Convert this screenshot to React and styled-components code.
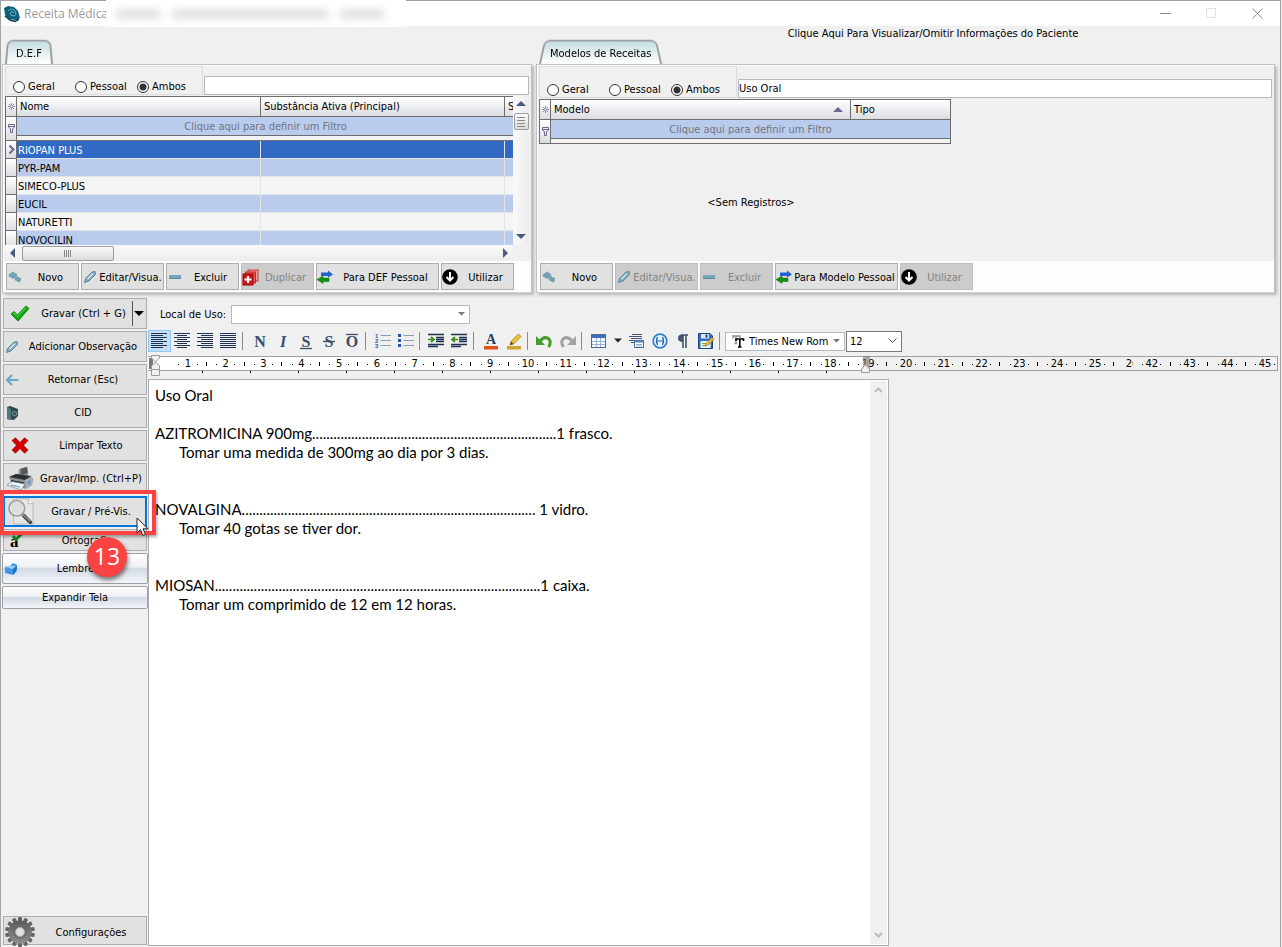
import React from 'react'
import styled, { createGlobalStyle, css } from 'styled-components'

const medicines = ['RIOPAN PLUS', 'PYR-PAM', 'SIMECO-PLUS', 'EUCIL', 'NATURETTI', 'NOVOCILIN']

const prescription = [
  'Uso Oral',
  '',
  'AZITROMICINA 900mg' + '.'.repeat(69) + '1 frasco.',
  '\tTomar uma medida de 300mg ao dia por 3 dias.',
  '',
  '',
  'NOVALGINA' + '.'.repeat(83) + ' 1 vidro.',
  '\tTomar 40 gotas se tiver dor.',
  '',
  '',
  'MIOSAN' + '.'.repeat(92) + '1 caixa.',
  '\tTomar um comprimido de 12 em 12 horas.',
].join('\n')

const rulerLeft = Array.from({ length: 25 }, (_, i) => i + 1)
const rulerRight = [42, 43, 44, 45]

/* ---------- icons ---------- */

const LogoIcon = () => (
  <svg width='16' height='16' viewBox='0 0 16 16'>
    <path d='M0 2 L4 0 L10 1 L14 5 L16 12 L12 14 L5 13 L1 9 Z' fill='#0d5f7c' />
    <path d='M4 5 Q7 1 11 5 Q13 9 10 10 Q6 10 6 7 Q8 4 10 7' fill='none' stroke='#6db6cb' />
    <path d='M1 10 L6 14 L11 15.500 L15 13' fill='none' stroke='#083a4e' strokeWidth='1.500' />
  </svg>
)

const NovoIcon = () => (
  <svg width='14' height='14' viewBox='0 0 14 14'>
    <g fill='#6fa6b5' stroke='#567f8d' strokeWidth='.5'>
      <path d='M3.500 3 L5.500 1.800 L6.500 3.500 L8.500 4 L8.500 6 L7 8 L4 8.200 L3 7 L1.200 6.500 L1.200 4.500 Z' />
      <path d='M8 7.500 L9.500 6.500 L10.500 7.800 L12.500 8.200 L12.500 10.200 L11.500 12 L9.500 11.500 L8.500 10.500 L7 10 Z' />
    </g>
  </svg>
)

const PencilIcon = () => (
  <svg width='14' height='14' viewBox='0 0 14 14'>
    <path d='M1.500 12.500 L2.500 8.500 L9 2 L12 1.500 L12.500 4.500 L6 11 Z' fill='#7fb0bf' stroke='#5f8795' />
    <path d='M4.500 9 L10 3.500' stroke='#d3e6ec' strokeWidth='1.300' />
  </svg>
)

const MinusIcon = () => (
  <svg width='14' height='14' viewBox='0 0 14 14'>
    <rect x='1' y='5' width='12' height='4' fill='#6fa9bb' />
    <path d='M1 8.500 H13' stroke='#5b8b9c' />
  </svg>
)

const DuplicateIcon = () => (
  <svg width='17' height='17' viewBox='0 0 17 17'>
    <rect x='6' y='1' width='10' height='11' fill='#e8a0a0' stroke='#c33' />
    <rect x='3.500' y='3' width='10' height='11' fill='#e06060' stroke='#c22' />
    <rect x='1' y='5' width='10' height='11' fill='#c91818' stroke='#a80000' />
    <path d='M6 7 V14 M2.500 10.500 H9.500' stroke='#fff' strokeWidth='2.200' />
  </svg>
)

const SwapIcon = () => (
  <svg width='16' height='14' viewBox='0 0 16 14'>
    <path d='M4 2.500 H11 V.5 L16 4.500 L11 7.500 V6 H4 Z' fill='#1f62d0' />
    <path d='M12 8 H6 V6 L0 9.500 L6 13.500 V11.500 H12 Z' fill='#12920f' stroke='#0b6b0a' strokeWidth='.5' />
  </svg>
)

const DownCircleIcon = () => (
  <svg width='16' height='16' viewBox='0 0 16 16'>
    <circle cx='8' cy='8' r='7.800' fill='#000' />
    <path d='M8 3 V11 M4.500 8 L8 11.500 L11.500 8' fill='none' stroke='#fff' strokeWidth='2' />
  </svg>
)

const CheckIcon = () => (
  <svg width='20' height='17' viewBox='0 0 20 17'>
    <path d='M1 9 L4 6.500 L7.500 10 L16 1 L19 3.500 L8 16 Z' fill='#12a812' stroke='#0a8a0a' />
    <path d='M3 9 L4 8 L7.500 11.500 L16 2.500' fill='none' stroke='#5fd85f' />
  </svg>
)

const BackIcon = () => (
  <svg width='13' height='12' viewBox='0 0 13 12'>
    <path d='M6 1 L1 6 L6 11 M1.500 6 H12.500' fill='none' stroke='#6aabc0' strokeWidth='2.200' />
  </svg>
)

const BookIcon = () => (
  <svg width='13' height='16' viewBox='0 0 13 16'>
    <path d='M1 2 L4 1 L12 4 V11 L8 15 L1 14 Z' fill='#2d4a4c' />
    <path d='M1 2 L5 4 V15 L1 14 Z' fill='#4f7779' />
    <circle cx='8.500' cy='8.500' r='2.800' fill='#5d8486' />
    <circle cx='8.500' cy='8.500' r='1.200' fill='#253c3e' />
  </svg>
)

const CrossIcon = () => (
  <svg width='18' height='17' viewBox='0 0 18 17'>
    <path
      d='M1 3.500 L4.500 .8 L9 5.500 L13.500 .8 L17 3.500 L12.500 8.300 L17 13 L13.500 16.200 L9 11.500 L4.500 16.200 L1 13 L5.500 8.300 Z'
      fill='#d40000'
      stroke='#a80000'
      strokeWidth='.7'
    />
  </svg>
)

const PrinterIcon = () => (
  <svg width='28' height='24' viewBox='0 0 28 24'>
    <path d='M13 2 L21 0 L22 9 L12 9 Z' fill='#8a8f94' />
    <path d='M15 1.500 L21 0 L22 6 L15 8 Z' fill='#54595e' />
    <path d='M3 10 L10 7 L25 9 L27 12 L26 18 L20 22 L6 17 Z' fill='#8b9095' />
    <path d='M3 10 L10 7 L25 9 L19 13 Z' fill='#2d3033' />
    <path d='M19 13 L26 10 L26 17 L20 22 Z' fill='#a9b2bb' />
    <path d='M22 14 L24.500 13 V16 L22 18 Z' fill='#5f93bd' />
    <path d='M5 13 L18 15.500 V18 L5 15 Z' fill='#1d1f21' />
    <path d='M1 18 L6 14.500 L19 17 L15 23 Z' fill='#f4f7fa' stroke='#7b8085' strokeWidth='.7' />
    <path d='M5 18 L14 20' stroke='#7fb1d6' strokeWidth='1.500' />
  </svg>
)

const MagnifierIcon = () => (
  <svg width='28' height='27' viewBox='0 0 28 29'>
    <path d='M6 1 H22 L27 6 V28 H6 Z' fill='#e6e6e6' stroke='#b5b5b5' />
    <path d='M22 1 V6 H27' fill='#fafafa' stroke='#b5b5b5' />
    <circle cx='9.500' cy='11' r='8' fill='#dcdfe2' stroke='#9a9a9a' strokeWidth='2.400' />
    <circle cx='9.500' cy='11' r='7' fill='none' stroke='#f5f5f5' />
    <path d='M17 19 L24 26' stroke='#444' strokeWidth='4' strokeLinecap='round' />
    <path d='M15.500 17.500 L24 25' stroke='#999' strokeWidth='1.500' />
  </svg>
)

const SpellIcon = () => (
  <svg width='14' height='17' viewBox='0 0 14 17'>
    <text x='1' y='15' fontFamily='Liberation Serif, serif' fontWeight='700' fontSize='17'>a</text>
    <path d='M4 4 L7 7.500 L13 1.500' fill='none' stroke='#168a20' strokeWidth='2.800' />
  </svg>
)

const BoxIcon = () => (
  <svg width='14' height='14' viewBox='0 0 14 14'>
    <path d='M1 5 L6 4 L9 1 L13 3 L12.500 9 L9 13 L1 11 Z' fill='#3f95e8' />
    <path d='M1 5 L6 4 L12 4 L9 7 Z' fill='#9dcff8' />
    <path d='M9 7 L13 3.500 L12.500 9 L9 13 Z' fill='#1c6fc4' />
  </svg>
)

const GearIcon = () => (
  <svg width='30' height='30' viewBox='-15 -15 30 30'>
    <defs>
      <linearGradient id='gear' x1='0' y1='0' x2='0' y2='1'>
        <stop offset='0' stopColor='#5b5b5b' />
        <stop offset='1' stopColor='#8e8e8e' />
      </linearGradient>
    </defs>
    {Array.from({ length: 14 }, (_, i) => (
      <rect key={i} x='-2' y='-15' width='4' height='6' rx='1' fill='#666' transform={`rotate(${(i * 360) / 14})`} />
    ))}
    <circle r='11.500' fill='url(#gear)' />
    <circle r='6' fill='none' stroke='#6a6a6a' strokeWidth='1.500' />
    <circle r='4.500' fill='#e1e1e1' stroke='#aaa' />
  </svg>
)

const AlignIcon = ({ rows }) => (
  <svg width='17' height='16' viewBox='0 0 17 16'>
    {rows.map(([x, w], i) => (
      <rect key={i} x={x} y={i * 2} width={w} height='1' fill='#1f3350' />
    ))}
  </svg>
)

const full = [0, 16]
const alignments = {
  left: [full, [0, 12], full, [0, 12], full, [0, 12], full, [0, 12]],
  center: [full, [3, 10], full, [3, 10], full, [3, 10], full, [3, 10]],
  right: [full, [4, 12], full, [4, 12], full, [4, 12], full, [4, 12]],
  justify: [full, full, full, full, full, full, full, full],
}

const LetterIcon = ({ letter, italic, line }) => (
  <svg width='16' height='17' viewBox='0 0 16 17'>
    <text
      x='8'
      y='14'
      textAnchor='middle'
      fontFamily='Liberation Serif, serif'
      fontWeight='700'
      fontStyle={italic ? 'italic' : 'normal'}
      fontSize='16'
      fill='#3a4d69'
    >
      {letter}
    </text>
    {line && <path d={`M2 ${line} H14`} stroke='#3a4d69' strokeWidth='1.300' />}
  </svg>
)

const ListIcon = ({ numbered }) => (
  <svg width='16' height='16' viewBox='0 0 16 16'>
    {[3, 8, 13].map((y, i) => (
      <g key={y}>
        <path d={`M5.500 ${y - 0.5} H16`} stroke='#8a9bb0' />
        {numbered ? (
          <text x='0' y={y + 2} fontSize='6' fontWeight='700' fontFamily='Liberation Sans, sans-serif' fill='#2456b8'>
            {i + 1}
          </text>
        ) : (
          <rect x='0' y={y - 2} width='3' height='3' fill='#2456b8' />
        )}
      </g>
    ))}
  </svg>
)

const IndentIcon = ({ back }) => (
  <svg width='17' height='16' viewBox='0 0 17 16'>
    <path d='M0 1.500 H16 M8 4.500 H16 M8 6.500 H16 M8 8.500 H16 M0 11.500 H16 M0 13.500 H10' stroke='#1f3350' strokeWidth='1.300' />
    <path d={back ? 'M7 6.500 H1.500 M4 4 L1 6.500 L4 9' : 'M0 6.500 H5.500 M3 4 L6 6.500 L3 9'} fill='none' stroke='#3b8a1e' strokeWidth='1.700' />
  </svg>
)

const FontColorIcon = () => (
  <svg width='16' height='17' viewBox='0 0 16 17'>
    <text x='8' y='11' textAnchor='middle' fontFamily='Liberation Serif, serif' fontWeight='700' fontSize='14' fill='#2b3f5c'>A</text>
    <rect x='1' y='13' width='14' height='3.500' fill='#e2501c' />
  </svg>
)

const MarkerIcon = () => (
  <svg width='16' height='17' viewBox='0 0 16 17'>
    <rect x='1' y='13' width='14' height='3.500' fill='#d1a43a' />
    <path d='M4 12 L5 8.500 L12.500 1 L15 3.500 L7.500 11 Z' fill='#f2c531' stroke='#9a7416' strokeWidth='.8' />
    <path d='M4 12 L5 8.500 L7.500 11 Z' fill='#5b4a2a' />
  </svg>
)

const UndoIcon = ({ flip }) => (
  <svg width='17' height='13' viewBox='0 0 17 13'>
    <g transform={flip ? 'translate(17 0) scale(-1 1)' : undefined}>
      <path d='M4 6 Q8 1 12.500 3.500 Q16 7 12.500 12' fill='none' stroke={flip ? '#a2a2a2' : '#459c2a'} strokeWidth='3' />
      <path d='M0 1 V10 H9 Z' fill={flip ? '#a2a2a2' : '#459c2a'} />
    </g>
  </svg>
)

const TableIcon = () => (
  <svg width='15' height='14' viewBox='0 0 15 14'>
    <rect x='.5' y='.5' width='14' height='13' fill='#f4f8fd' stroke='#4a6a98' />
    <rect x='1' y='1' width='13' height='3' fill='#3d6cc0' />
    <path d='M1 7.500 H14 M1 10.500 H14 M5.500 4 V13 M9.500 4 V13' stroke='#9db4d2' />
  </svg>
)

const FieldIcon = () => (
  <svg width='16' height='16' viewBox='0 0 16 16'>
    <path d='M3 1.500 H13 M0 3.500 H13 M2 5.500 H13 M0 7.500 H6 M2 9.500 H6' stroke='#42566f' />
    <rect x='5.500' y='7.500' width='9' height='7' fill='#fff' stroke='#4a6a98' />
    <rect x='5.500' y='7.500' width='9' height='2' fill='#4f86c8' />
    <path d='M7 11.500 H13 M7 13 H13' stroke='#7f97b5' strokeWidth='.8' />
  </svg>
)

const ThetaIcon = () => (
  <svg width='16' height='16' viewBox='0 0 16 16'>
    <circle cx='8' cy='8' r='6.800' fill='#eaf4fd' stroke='#2f7fd0' strokeWidth='1.700' />
    <path d='M5.500 4 Q3.500 8 5.500 12 M10.500 4 Q12.500 8 10.500 12 M4.500 8 H11.500' fill='none' stroke='#1f5fae' strokeWidth='1.200' />
  </svg>
)

const PilcrowIcon = () => (
  <svg width='12' height='15' viewBox='0 0 12 15'>
    <path d='M5 1 H11 M6 1 V14 M9 1 V14' stroke='#41546e' strokeWidth='1.600' />
    <path d='M6 .3 Q1 .3 1 4.200 Q1 8 6 8 Z' fill='#41546e' />
  </svg>
)

const SaveIcon = () => (
  <svg width='16' height='16' viewBox='0 0 16 16'>
    <path d='M.5 .5 H12 L14.500 3 V15.500 H.5 Z' fill='#2f6cc4' stroke='#1d447f' />
    <rect x='3' y='1' width='8' height='4.500' fill='#dfe9f5' />
    <rect x='7.500' y='1.500' width='2' height='3' fill='#1d447f' />
    <rect x='2.500' y='8' width='10' height='7' fill='#eef5e4' />
    <path d='M4 10.500 H10 M4 12.500 H8' stroke='#6fae4f' />
    <path d='M7 13 L8 10.500 L14 4.500 L16 6.500 L9.500 12.500 Z' fill='#f0b93a' stroke='#96701a' strokeWidth='.7' />
  </svg>
)

const TrueTypeIcon = () => (
  <svg width='12' height='13' viewBox='0 0 12 13'>
    <path d='M1 3.500 V1 H8 V3 M4 1 V8 M2.500 8.500 H5' fill='none' stroke='#888' strokeWidth='1.300' />
    <path d='M4 6 V4 H11.500 V6 M7.800 4 V12 M6 12 H9.500' fill='none' stroke='#000' strokeWidth='1.600' />
  </svg>
)

const CursorIcon = () => (
  <svg width='13' height='20' viewBox='0 0 13 20'>
    <path d='M1 1 V16 L4.500 12.700 L7 18.500 L9.500 17.400 L7 11.800 H12 Z' fill='#fff' stroke='#222' />
  </svg>
)

const StarMark = () => (
  <svg width='7' height='7' viewBox='0 0 7 7'>
    <path d='M3.500 0 V7 M0 3.500 H7 M1 1 L6 6 M6 1 L1 6' stroke='#77739a' strokeWidth='.8' />
    <circle cx='3.500' cy='3.500' r='1' fill='#f0f0f0' />
  </svg>
)

const FunnelMark = () => (
  <svg width='7' height='9' viewBox='0 0 7 9'>
    <path d='M.5 .5 H6.500 V3 L4.500 5 V8.500 H2.500 V5 L.5 3 Z M.5 2.500 H6.500' fill='none' stroke='#6a6690' />
  </svg>
)

const RowMark = () => (
  <svg width='7' height='9' viewBox='0 0 7 9'>
    <path d='M1.500 .5 L5.500 4.500 L1.500 8.500' fill='none' stroke='#6a6690' strokeWidth='2' />
  </svg>
)

const Triangle = ({ dir = 'down', size = 10, color = '#4b5a82' }) => {
  const shapes = { down: 'M0 2 H10 L5 7 Z', up: 'M0 7 H10 L5 2 Z', left: 'M7 0 V10 L2 5 Z', right: 'M3 0 V10 L8 5 Z' }
  return (
    <svg width={size} height={size} viewBox='0 0 10 10'>
      <path d={shapes[dir]} fill={color} />
    </svg>
  )
}

/* ---------- small parts ---------- */

const FilterBar = ({ name, value, tall }) => (
  <FilterRow $tall={tall}>
    <RadioGroup>
      {['Geral', 'Pessoal', 'Ambos'].map((label) => (
        <RadioLabel key={label}>
          <Radio type='radio' name={name} defaultChecked={label === 'Ambos'} />
          {label}
        </RadioLabel>
      ))}
    </RadioGroup>
    <SearchInput type='text' aria-label='Pesquisar' defaultValue={value} />
  </FilterRow>
)

const Action = ({ icon, wide, disabled, children }) => (
  <ActionButton type='button' $wide={wide} disabled={disabled}>
    {icon}
    <span>{children}</span>
  </ActionButton>
)

const App = () => {
  return (
    <>
      <GlobalStyle />
      <Window>
        <TitleBar>
          <LogoIcon />
          <h1>Receita Médica</h1>
          <Blurred>
            <i />
            <i />
            <i />
          </Blurred>
          <WindowButton type='button' aria-label='Minimizar'>
            <svg width='11' height='11'><path d='M0 5.500 H11' stroke='#8a8a8a' /></svg>
          </WindowButton>
          <WindowButton type='button' aria-label='Maximizar'>
            <svg width='11' height='11'><rect x='.5' y='.5' width='9' height='9' fill='none' stroke='#e2e2e2' /></svg>
          </WindowButton>
          <WindowButton type='button' aria-label='Fechar'>
            <svg width='11' height='11'><path d='M.5 .5 L10.500 10.500 M10.500 .5 L.5 10.500' stroke='#8a8a8a' /></svg>
          </WindowButton>
        </TitleBar>

        <PatientBar>
          <button type='button'>Clique Aqui Para Visualizar/Omitir Informações do Paciente</button>
        </PatientBar>

        <Panels>
          <section>
            <Tab type='button'>D.E.F</Tab>
            <Panel>
              <FilterBar name='def' />
              <GridArea>
                <GridClip>
                  <DataTable>
                    <colgroup>
                      <Col $w={12} />
                      <Col $w={244} />
                      <Col $w={244} />
                      <Col $w={9} />
                    </colgroup>
                    <thead>
                      <tr>
                        <Mark><StarMark /></Mark>
                        <HeadCell>Nome</HeadCell>
                        <HeadCell>Substância Ativa (Principal)</HeadCell>
                        <HeadCell>S</HeadCell>
                      </tr>
                    </thead>
                    <tbody>
                      <tr>
                        <Mark rowSpan='2'><FunnelMark /></Mark>
                        <FilterCell colSpan='3'>Clique aqui para definir um Filtro</FilterCell>
                      </tr>
                      <tr><SplitCell colSpan='3' /></tr>
                      {medicines.map((name, i) => (
                        <DataRow key={name} $selected={i === 0}>
                          <Mark>{i === 0 && <RowMark />}</Mark>
                          <td>{name}</td>
                          <td />
                          <td />
                        </DataRow>
                      ))}
                    </tbody>
                  </DataTable>
                </GridClip>
                <VScroll>
                  <Triangle dir='up' />
                  <VThumb>
                    <svg width='8' height='10'><path d='M0 .5 H8 M0 3.500 H8 M0 6.500 H8 M0 9.500 H8' stroke='#888' /></svg>
                  </VThumb>
                  <Triangle dir='down' />
                </VScroll>
                <HScroll>
                  <Triangle dir='left' />
                  <HThumb>
                    <svg width='8' height='7'><path d='M.5 0 V7 M2.500 0 V7 M4.500 0 V7 M6.500 0 V7' stroke='#888' /></svg>
                  </HThumb>
                  <Triangle dir='right' />
                </HScroll>
              </GridArea>
              <Actions>
                <Action icon={<NovoIcon />}>Novo</Action>
                <Action icon={<PencilIcon />} wide={83}>Editar/Visua.</Action>
                <Action icon={<MinusIcon />}>Excluir</Action>
                <Action icon={<DuplicateIcon />} disabled>Duplicar</Action>
                <Action icon={<SwapIcon />} wide={123}>Para DEF Pessoal</Action>
                <Action icon={<DownCircleIcon />}>Utilizar</Action>
              </Actions>
            </Panel>
          </section>

          <section>
            <Tab type='button'>Modelos de Receitas</Tab>
            <Panel>
              <FilterBar name='modelos' value='Uso Oral' tall />
              <ModelGrid>
                <DataTable>
                  <colgroup>
                    <Col $w={12} />
                    <Col $w={300} />
                    <Col $w={100} />
                  </colgroup>
                  <thead>
                    <tr>
                      <Mark><StarMark /></Mark>
                      <HeadCell>
                        <Sorted>Modelo<Triangle dir='up' color='#6a6690' /></Sorted>
                      </HeadCell>
                      <HeadCell>Tipo</HeadCell>
                    </tr>
                  </thead>
                  <tbody>
                    <tr>
                      <Mark rowSpan='2'><FunnelMark /></Mark>
                      <FilterCell colSpan='2' $closed>Clique aqui para definir um Filtro</FilterCell>
                    </tr>
                    <tr><SplitCell colSpan='2' $closed /></tr>
                  </tbody>
                </DataTable>
                <Empty>&lt;Sem Registros&gt;</Empty>
              </ModelGrid>
              <Actions>
                <Action icon={<NovoIcon />}>Novo</Action>
                <Action icon={<PencilIcon />} wide={83} disabled>Editar/Visua.</Action>
                <Action icon={<MinusIcon />} disabled>Excluir</Action>
                <Action icon={<SwapIcon />} wide={123}>Para Modelo Pessoal</Action>
                <Action icon={<DownCircleIcon />} disabled>Utilizar</Action>
              </Actions>
            </Panel>
          </section>
        </Panels>

        <Main>
          <Sidebar>
            <SplitButton>
              <SideButton type='button' $icon={32}><CheckIcon /><span>Gravar (Ctrl + G)</span></SideButton>
              <DropButton type='button' aria-label='Mais opções'><Triangle color='#000' size={10} /></DropButton>
            </SplitButton>
            <SideButton type='button' $icon={16}><PencilIcon /><span>Adicionar Observação</span></SideButton>
            <SideButton type='button' $icon={16}><BackIcon /><span>Retornar (Esc)</span></SideButton>
            <SideButton type='button' $icon={16}><BookIcon /><span>CID</span></SideButton>
            <SideButton type='button' $icon={32}><CrossIcon /><span>Limpar Texto</span></SideButton>
            <SideButton type='button' $icon={32}><PrinterIcon /><span>Gravar/Imp. (Ctrl+P)</span></SideButton>
            <Highlighted>
              <SideButton type='button' $icon={32} $focused><MagnifierIcon /><span>Gravar / Pré-Vis.</span></SideButton>
              <RedFrame />
              <Pointer><CursorIcon /></Pointer>
              <StepBadge>13</StepBadge>
            </Highlighted>
            <SideButton type='button' $icon={24} $h={22}><SpellIcon /><span>Ortografia</span></SideButton>
            <GlossButton type='button' $icon={16}><BoxIcon /><span>Lembretes</span></GlossButton>
            <GlossButton type='button' $icon={0} $h={23}><span>Expandir Tela</span></GlossButton>
            <BottomButton type='button' $icon={32} $h={29}><GearIcon /><span>Configurações</span></BottomButton>
          </Sidebar>

          <Editor>
            <UseRow>
              <label htmlFor='local'>Local de Uso:</label>
              <SelectBox $w={239} $h={19}>
                <select id='local' />
                <Triangle color='#777' size={7} />
              </SelectBox>
            </UseRow>

            <Toolbar>
              <Tool type='button' aria-label='Esquerda' $active><AlignIcon rows={alignments.left} /></Tool>
              <Tool type='button' aria-label='Centro'><AlignIcon rows={alignments.center} /></Tool>
              <Tool type='button' aria-label='Direita'><AlignIcon rows={alignments.right} /></Tool>
              <Tool type='button' aria-label='Justificar'><AlignIcon rows={alignments.justify} /></Tool>
              <Divider />
              <Tool type='button' aria-label='Negrito'><LetterIcon letter='N' /></Tool>
              <Tool type='button' aria-label='Itálico'><LetterIcon letter='I' italic /></Tool>
              <Tool type='button' aria-label='Sublinhado'><LetterIcon letter='S' line={15.5} /></Tool>
              <Tool type='button' aria-label='Tachado'><LetterIcon letter='S' line={8.5} /></Tool>
              <Tool type='button' aria-label='Sobrelinha'><LetterIcon letter='O' line={1.5} /></Tool>
              <Divider />
              <Tool type='button' aria-label='Numeração'><ListIcon numbered /></Tool>
              <Tool type='button' aria-label='Marcadores'><ListIcon /></Tool>
              <Divider />
              <Tool type='button' aria-label='Aumentar recuo'><IndentIcon /></Tool>
              <Tool type='button' aria-label='Diminuir recuo'><IndentIcon back /></Tool>
              <Divider />
              <Tool type='button' aria-label='Cor da fonte'><FontColorIcon /></Tool>
              <Tool type='button' aria-label='Realce'><MarkerIcon /></Tool>
              <Divider />
              <Tool type='button' aria-label='Desfazer'><UndoIcon /></Tool>
              <Tool type='button' aria-label='Refazer'><UndoIcon flip /></Tool>
              <Divider />
              <Tool type='button' aria-label='Tabela'><TableIcon /></Tool>
              <Tool type='button' aria-label='Opções da tabela' $narrow><Triangle color='#222' size={8} /></Tool>
              <Tool type='button' aria-label='Campo'><FieldIcon /></Tool>
              <Tool type='button' aria-label='Símbolo'><ThetaIcon /></Tool>
              <Tool type='button' aria-label='Parágrafo'><PilcrowIcon /></Tool>
              <Tool type='button' aria-label='Salvar'><SaveIcon /></Tool>
              <Divider />
              <SelectBox $w={120} $h={19} $pad={23}>
                <FontMark><TrueTypeIcon /></FontMark>
                <select aria-label='Fonte'><option>Times New Roman</option></select>
                <Triangle color='#777' size={7} />
              </SelectBox>
              <SelectBox $w={56} $h={21} $dark>
                <select aria-label='Tamanho'><option>12</option></select>
                <svg width='9' height='6'><path d='M.5 .5 L4.500 4.500 L8.500 .5' fill='none' stroke='#555' /></svg>
              </SelectBox>
            </Toolbar>

            <Ruler>
              <Track>
                <Scale $count={25}>
                  {rulerLeft.map((n) => <span key={n}>{n}</span>)}
                </Scale>
                <Cut>26</Cut>
                <Scale $count={4}>
                  {rulerRight.map((n) => <span key={n}>{n}</span>)}
                </Scale>
              </Track>
              <LeftHandle>
                <svg width='16' height='22' viewBox='0 0 16 22'>
                  <rect x='1' y='4' width='4' height='11' fill='#777' />
                  <path d='M3.500 1.500 H11.500 V4 L7.500 8 L11.500 12 V21.500 H3.500 V12 L7.500 8 L3.500 4 Z M3.500 15.500 H11.500' fill='#f0f0f0' stroke='#999' />
                </svg>
              </LeftHandle>
              <RightHandle>
                <svg width='11' height='18' viewBox='0 0 11 18'>
                  <rect x='2' y='0' width='7' height='13' fill='#777' opacity='.6' />
                  <path d='M.5 16.500 V13 L4.500 8.500 L8.500 13 V16.500 Z' fill='#f0f0f0' stroke='#999' />
                </svg>
              </RightHandle>
            </Ruler>
            <TabStops />

            <Page>
              <textarea aria-label='Receita' wrap='off' defaultValue={prescription} spellCheck='false' />
              <PageScroll>
                <svg width='9' height='6'><path d='M1 5 L4.500 1.500 L8 5' fill='none' stroke='#bbb' strokeWidth='2' /></svg>
                <svg width='9' height='6'><path d='M1 1 L4.500 4.500 L8 1' fill='none' stroke='#bbb' strokeWidth='2' /></svg>
              </PageScroll>
            </Page>
          </Editor>
        </Main>
      </Window>
    </>
  )
}

const GlobalStyle = createGlobalStyle`
  * {
    box-sizing: border-box;
  }
  body {
    margin: 0;
    background: #f0f0f0;
    color: #000;
    font: 11px/15px 'DejaVu Sans Condensed', 'Noto Sans', sans-serif;
  }
  button, input, select {
    font: inherit;
    color: inherit;
    margin: 0;
    padding: 0;
  }
  svg {
    display: block;
    flex-shrink: 0;
    overflow: visible;
  }
`

const Window = styled.main`
  min-height: 100vh;
  margin-right: 1px;
  border: 1px solid #a5a5a5;
  border-bottom: 0;
  display: flex;
  flex-direction: column;
`

const TitleBar = styled.header`
  height: 25px;
  background: #fff;
  display: flex;
  align-items: center;
  padding-left: 3px;
  h1 {
    width: 82px;
    margin: 0 0 0 4px;
    font: 12px/16px 'Open Sans', sans-serif;
    color: #999;
    white-space: nowrap;
  }
`

const Blurred = styled.div`
  display: flex;
  align-items: center;
  gap: 12px;
  width: 300px;
  height: 27px;
  margin-right: auto;
  padding: 0 10px;
  background: #fff;
  i {
    height: 8px;
    background: #dadada;
    filter: blur(4px);
  }
  i:nth-child(1) { width: 44px; }
  i:nth-child(2) { width: 156px; }
  i:nth-child(3) { width: 44px; }
`

const WindowButton = styled.button`
  width: 46px;
  height: 25px;
  display: grid;
  place-items: center;
  border: 0;
  background: none;
`

const PatientBar = styled.div`
  height: 15px;
  padding-left: 585px;
  text-align: center;
  button {
    border: 0;
    background: none;
    display: inline-block;
  }
`

const Panels = styled.div`
  display: grid;
  grid-template-columns: 530px 1fr;
  gap: 4px;
  padding: 0 5px 5px 1px;
`

const Tab = styled.button`
  position: relative;
  z-index: 0;
  display: block;
  height: 23px;
  margin-left: 4px;
  padding: 1px 10px 0;
  border: 0;
  background: none;
  &::before {
    content: '';
    position: absolute;
    z-index: -1;
    inset: -4px -1px 0;
    border: 1px solid #9a9fa3;
    border-width: 2px 2px 0;
    border-radius: 7px 7px 0 0;
    background: linear-gradient(#c5dde2, #fff);
    transform: perspective(60px) rotateX(12deg);
    transform-origin: bottom;
  }
`

const Panel = styled.div`
  height: 229px;
  display: flex;
  flex-direction: column;
  border: 1px solid #bfc0c2;
  border-bottom-color: #d0d0d0;
  padding: 1px 2px 0;
  box-shadow: 2px 2px 3px #b5b5b5, inset 1px 1px 0 #fff;
  background: #f0f0f0;
`

const FilterRow = styled.div`
  display: flex;
  align-items: flex-end;
  gap: 1px;
  height: ${(p) => (p.$tall ? 33 : 30)}px;
  padding-bottom: 1px;
`

const RadioGroup = styled.div`
  width: 198px;
  height: 100%;
  display: grid;
  grid-template-columns: 62px 62px 1fr;
  align-items: end;
  padding: 0 0 0 7px;
  border: 1px solid #dcdcdc;
`

const RadioLabel = styled.label`
  display: flex;
  align-items: center;
  gap: 3px;
`

const Radio = styled.input`
  appearance: none;
  width: 12px;
  height: 12px;
  border: 1px solid #333;
  border-radius: 50%;
  background: #fff;
  &:checked {
    background: radial-gradient(circle, #333 3px, #fff 4px);
  }
`

const SearchInput = styled.input`
  flex: 1;
  min-width: 0;
  height: 19px;
  border: 1px solid #b4bac4;
  background: #fff;
`

const GridArea = styled.div`
  display: grid;
  grid-template-columns: 1fr 16px;
  grid-template-rows: 149px 16px;
`

const GridClip = styled.div`
  overflow: hidden;
`

const DataTable = styled.table`
  table-layout: fixed;
  border-collapse: separate;
  border-spacing: 0;
  width: 1px;
  td, th {
    padding: 0;
    font-weight: 400;
    white-space: nowrap;
    overflow: hidden;
  }
`

const Col = styled.col`
  width: ${(p) => p.$w}px;
`

const headGradient = css`
  background: linear-gradient(#fff, #dcdde2);
`

const Mark = styled.td`
  ${headGradient}
  border: 1px solid #6e6e6e;
  border-top: 0;
  svg {
    margin: 0 auto;
  }
  thead & {
    border-top: 1px solid #6e6e6e;
  }
`

const HeadCell = styled.th`
  ${headGradient}
  height: 21px;
  text-align: left;
  border: 1px solid #6e6e6e;
  border-left: 0;
  && {
    padding-left: 3px;
  }
  &:nth-child(4) {
    border-right: 0;
  }
`

const Sorted = styled.div`
  display: flex;
  align-items: center;
  justify-content: space-between;
  padding-right: 7px;
`

const FilterCell = styled.td`
  height: 19px;
  background: #bacced;
  border-bottom: 1px solid #6e6e6e;
  border-right: ${(p) => (p.$closed ? '1px solid #6e6e6e' : 0)};
  text-align: center;
  color: #71757f;
`

const SplitCell = styled.td`
  height: 5px;
  background: #f2f2f2;
  border-bottom: 1px solid #6e6e6e;
  border-right: ${(p) => (p.$closed ? '1px solid #6e6e6e' : 0)};
`

const DataRow = styled.tr`
  height: 18px;
  background: #f3f5f4;
  &:nth-child(even) {
    background: #bacced;
  }
  && {
    ${(p) => p.$selected && 'background: #316ac5; color: #fff;'}
  }
  td + td {
    height: 18px;
    padding: 1px 0 0 1px;
    border-right: 1px solid #e3e3e3;
    border-bottom: 1px solid #e3e3e3;
  }
`

const VScroll = styled.div`
  display: flex;
  flex-direction: column;
  align-items: center;
  padding: 3px 0;
  background: linear-gradient(to right, #fafafa, #ececec);
  > svg:last-child {
    margin-top: auto;
  }
`

const thumb = css`
  display: grid;
  place-items: center;
  border: 1px solid #9b9b9b;
  border-radius: 2px;
  background: linear-gradient(#fafafa, #dcdcdc);
`

const VThumb = styled.div`
  ${thumb}
  width: 15px;
  height: 17px;
  margin-top: 4px;
`

const HScroll = styled.div`
  display: flex;
  align-items: center;
  padding: 0 3px;
  background: linear-gradient(#fafafa, #ececec);
  > svg:last-child {
    margin-left: auto;
  }
`

const HThumb = styled.div`
  ${thumb}
  width: 92px;
  height: 15px;
  margin-left: 4px;
`

const ModelGrid = styled.div`
  flex: 1;
  display: flex;
  flex-direction: column;
  width: 412px;
`

const Empty = styled.p`
  flex: 1;
  margin: 0;
  padding-left: 12px;
  display: grid;
  place-items: center;
`

const Actions = styled.div`
  display: flex;
  gap: 2px;
  margin: auto -2px 0;
  padding: 2px 3px;
  background: #fdfdfd;
`

const ActionButton = styled.button`
  display: grid;
  grid-template-columns: 16px 1fr;
  align-items: center;
  justify-items: center;
  width: ${(p) => p.$wide || 73}px;
  height: 27px;
  padding-top: 1px;
  border: 1px solid #adadad;
  background: #e1e1e1;
  white-space: nowrap;
  &:disabled {
    background: #ccc;
    border-color: #bfbfbf;
    color: #838383;
  }
`

const Main = styled.div`
  flex: 1;
  display: flex;
`

const Sidebar = styled.nav`
  width: 147px;
  display: flex;
  flex-direction: column;
  gap: 2px;
  padding: 0 1px 2px 2px;
`

const SideButton = styled.button`
  display: grid;
  grid-template-columns: ${(p) => (p.$icon ? `${p.$icon}px 1fr` : '1fr')};
  align-items: center;
  justify-items: center;
  width: 100%;
  height: ${(p) => p.$h || 31}px;
  border: ${(p) => (p.$focused ? '2px solid #0078d7' : '1px solid #adadad')};
  background: #e1e1e1;
  white-space: nowrap;
`

const GlossButton = styled(SideButton)`
  width: 146px;
  margin-left: -1px;
  border: 1px solid #9aa0a8;
  border-radius: 2px;
  background: linear-gradient(#fff, #eef1f5 45%, #d3dae4 50%, #f3f6fa);
`

const BottomButton = styled(SideButton)`
  margin-top: auto;
`

const SplitButton = styled.div`
  display: flex;
  ${SideButton} {
    border-right: 0;
  }
`

const DropButton = styled.button`
  width: 16px;
  flex-shrink: 0;
  border: 1px solid #adadad;
  border-left: 0;
  background: linear-gradient(#555, #555) 1px 50% / 1px 25px no-repeat #e1e1e1;
  display: grid;
  place-items: center;
`

const Highlighted = styled.div`
  position: relative;
  z-index: 1;
`

const RedFrame = styled.div`
  position: absolute;
  inset: -6px -9px -8px -3px;
  border: 4px solid #fb4343;
  box-shadow: 1px 2px 3px rgba(0, 0, 0, 0.35);
  pointer-events: none;
`

const Pointer = styled.div`
  position: absolute;
  top: 21px;
  left: 133px;
`

const StepBadge = styled.strong`
  position: absolute;
  top: 41px;
  left: 84px;
  width: 40px;
  height: 40px;
  border-radius: 50%;
  background: #fb4343;
  box-shadow: 1px 3px 4px rgba(0, 0, 0, 0.5);
  color: #fff;
  text-align: center;
  font: 23px/38px 'Open Sans', sans-serif;
`

const Editor = styled.section`
  flex: 1;
  min-width: 0;
  display: flex;
  flex-direction: column;
`

const UseRow = styled.div`
  display: flex;
  align-items: center;
  gap: 7px;
  height: 32px;
  padding-left: 12px;
  label {
    width: 64px;
    white-space: nowrap;
  }
`

const SelectBox = styled.div`
  position: relative;
  width: ${(p) => p.$w}px;
  height: ${(p) => p.$h}px;
  border: 1px solid ${(p) => (p.$dark ? '#7a7a7a' : '#b4bac4')};
  background: #fff;
  select {
    appearance: none;
    display: block;
    width: 100%;
    height: 100%;
    border: 0;
    background: none;
    padding: 0 16px 0 ${(p) => p.$pad || 3}px;
  }
  > svg {
    position: absolute;
    right: 4px;
    top: 50%;
    transform: translateY(-50%);
    pointer-events: none;
  }
`

const FontMark = styled.span`
  position: absolute;
  left: 6px;
  top: 2px;
`

const Toolbar = styled.div`
  display: flex;
  align-items: center;
  height: 22px;
  ${SelectBox} + ${SelectBox} {
    margin-left: 1px;
  }
`

const Tool = styled.button`
  width: ${(p) => (p.$narrow ? 15 : 23)}px;
  height: 22px;
  display: grid;
  place-items: center;
  border: 1px solid ${(p) => (p.$active ? '#90c8f6' : 'transparent')};
  background: ${(p) => (p.$active ? '#c2dff5' : 'none')};
`

const Divider = styled.div`
  width: 8px;
  height: 18px;
  background: linear-gradient(#8c8c8c, #8c8c8c) 2px 0 / 1px 100% no-repeat;
`

const Ruler = styled.div`
  position: relative;
  height: 15px;
  margin: 4px 2px 0 0;
  border: 1px solid #a0a0a0;
  border-left: 0;
  background: linear-gradient(to right, #fff 718px, #f0f0f0 718px);
`

const Track = styled.div`
  display: flex;
  height: 13px;
  padding-left: 21px;
  overflow: hidden;
`

const Scale = styled.div`
  display: grid;
  grid-template-columns: repeat(${(p) => p.$count}, 1fr);
  flex: ${(p) => p.$count} 1 0;
  &:last-child {
    margin-right: -7px;
  }
  span {
    text-align: center;
    line-height: 14px;
    background:
      linear-gradient(#000, #000) 25% 7px / 1px 1px no-repeat,
      linear-gradient(#000, #000) 75% 7px / 1px 1px no-repeat,
      linear-gradient(#000, #000) 100% 5px / 1px 4px no-repeat;
  }
`

const Cut = styled.span`
  width: 19px;
  padding-left: 12px;
  overflow: hidden;
  line-height: 14px;
`

const LeftHandle = styled.div`
  position: absolute;
  left: 0;
  top: -3px;
`

const RightHandle = styled.div`
  position: absolute;
  left: 713px;
  top: -1px;
`

/* default tab stops, one mark each 48px */
const TabStops = styled.div`
  width: 700px;
  height: 2px;
  margin: 0 0 6px 7px;
  background: repeating-linear-gradient(to right, transparent 0 47px, #000 47px 48px);
`

const Page = styled.div`
  flex: 1;
  display: flex;
  width: 741px;
  margin-bottom: 1px;
  padding: 1px;
  border: 1px solid #abadb3;
  background: #fff;
  textarea {
    flex: 1;
    border: 0;
    outline: 0;
    resize: none;
    overflow: hidden;
    padding: 5px;
    background: none;
    color: #000;
    font: 15px/19px Lato, sans-serif;
    tab-size: 24px;
  }
`

const PageScroll = styled.div`
  width: 17px;
  display: flex;
  flex-direction: column;
  align-items: center;
  justify-content: space-between;
  padding: 6px 0;
  background: #f0f0f0;
`

export default App
